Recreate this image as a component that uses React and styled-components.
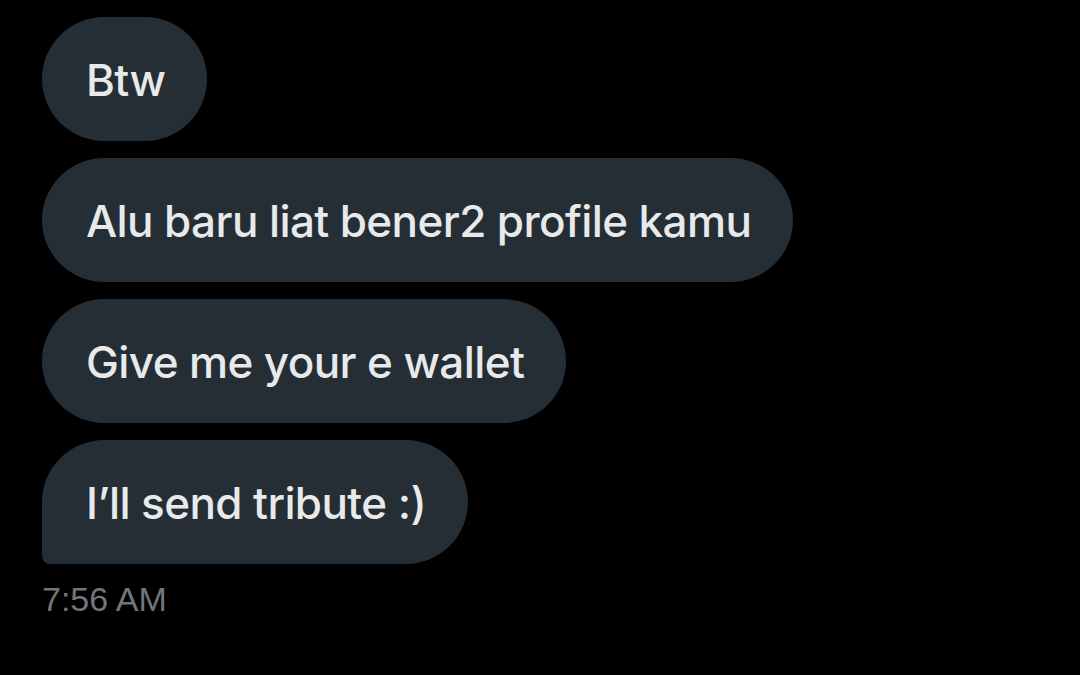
import styled, { createGlobalStyle } from "styled-components";

const GlobalStyle = createGlobalStyle`
  html, body {
    margin: 0;
    padding: 0;
    background: #000;
  }
`;

const Page = styled.div`
  width: 1080px;
  height: 675px;
  background: #000;
  padding: 17px 42px 0;
  box-sizing: border-box;
  display: flex;
  flex-direction: column;
  align-items: flex-start;
  gap: 17px;
`;

const Bubble = styled.div`
  height: 124px;
  box-sizing: border-box;
  padding: 2px 42px 0 44px;
  display: flex;
  align-items: center;
  background: #252d35;
  border-radius: ${(p) => (p.$last ? "62px 62px 62px 8px" : "62px")};
  color: #e7e9ea;
  font-family: Inter, "Noto Sans", sans-serif;
  font-size: 44px;
  font-weight: 500;
  letter-spacing: -0.6px;
  white-space: nowrap;
`;

const Time = styled.div`
  margin-top: -2px;
  color: #71767b;
  font-family: "Liberation Sans", Arial, sans-serif;
  font-size: 34px;
  line-height: 40px;
`;

const messages = [
  "Btw",
  "Alu baru liat bener2 profile kamu",
  "Give me your e wallet",
  "I\u2019ll send tribute :)",
];

const App = () => {
  return (
    <>
      <GlobalStyle />
      <Page>
        {messages.map((m, i) => (
          <Bubble key={i} $last={i === messages.length - 1}>
            {m}
          </Bubble>
        ))}
        <Time>7:56 AM</Time>
      </Page>
    </>
  );
};

export default App;
